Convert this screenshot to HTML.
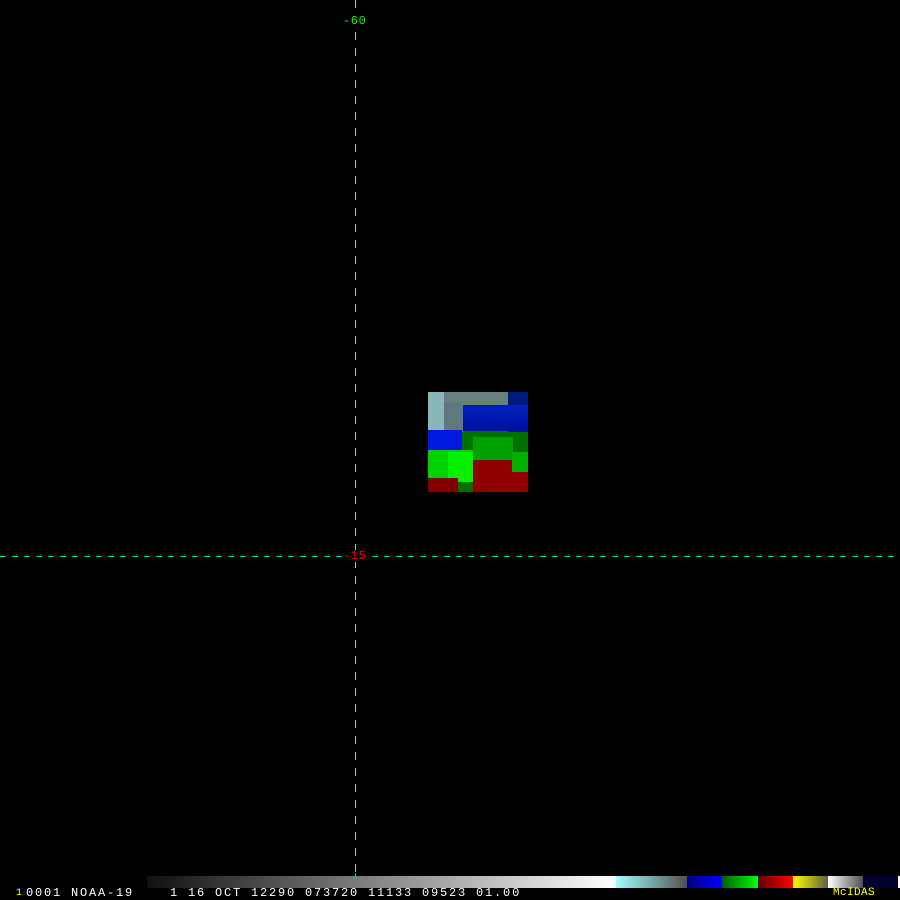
<!DOCTYPE html>
<html><head><style>
body{margin:0;width:900px;height:900px;background:#000;position:relative;overflow:hidden;font-family:"Liberation Mono",monospace}
.a{position:absolute}
.t{position:absolute;font-size:12px;line-height:12px;white-space:pre}
</style></head><body>
<div class="a" style="left:355px;top:0;width:1px;height:880px;background:repeating-linear-gradient(to bottom,#9cc 0 8px,transparent 8px 16px)"></div>
<div class="a" style="left:0;top:556px;width:900px;height:1px;background:repeating-linear-gradient(to right,#0cc 0 6px,transparent 6px 12px)"></div>
<div class="t" style="left:343px;top:15px;color:#0f0;background:#000;letter-spacing:0.6px">-60</div>
<div class="t" style="left:343px;top:550px;color:#f00;background:#000;letter-spacing:0.6px">-15</div>

<div class="a" style="left:428px;top:392px;width:100px;height:100px;background:#007000;overflow:hidden">
 <div class="a" style="left:0;top:0;width:100px;height:14px;background:#6a7f80"></div>
 <div class="a" style="left:80px;top:0;width:20px;height:40px;background:#001a80"></div>
 <div class="a" style="left:34px;top:13px;width:66px;height:26px;background:linear-gradient(#0020c0,#0010a0)"></div>
 <div class="a" style="left:15px;top:10px;width:20px;height:30px;background:#607880"></div>
 <div class="a" style="left:0;top:0;width:16px;height:40px;background:#8ab8b8"></div>
 <div class="a" style="left:0;top:38px;width:34px;height:22px;background:#0018e0"></div>
 <div class="a" style="left:0;top:58px;width:45px;height:30px;background:#00d000"></div>
 <div class="a" style="left:20px;top:60px;width:25px;height:30px;background:#00f000"></div>
 <div class="a" style="left:45px;top:45px;width:40px;height:25px;background:#00a000"></div>
 <div class="a" style="left:45px;top:68px;width:55px;height:32px;background:#900000"></div>
 <div class="a" style="left:84px;top:60px;width:16px;height:20px;background:#00b000"></div>
 <div class="a" style="left:0;top:86px;width:30px;height:14px;background:#800000"></div>
</div>

<div class="a" style="left:147px;top:876px;width:469px;height:12px;background:linear-gradient(to right,#101010,#fff)"></div>
<div class="a" style="left:616px;top:876px;width:71px;height:12px;background:linear-gradient(to right,#a0ffff,#505050)"></div>
<div class="a" style="left:687px;top:876px;width:35px;height:12px;background:linear-gradient(to right,#000080,#0000ff)"></div>
<div class="a" style="left:722px;top:876px;width:36px;height:12px;background:linear-gradient(to right,#006000,#00ff00)"></div>
<div class="a" style="left:758px;top:876px;width:35px;height:12px;background:linear-gradient(to right,#600000,#ff0000)"></div>
<div class="a" style="left:793px;top:876px;width:35px;height:12px;background:linear-gradient(to right,#ffff00,#606040)"></div>
<div class="a" style="left:828px;top:876px;width:35px;height:12px;background:linear-gradient(to right,#fff,#505050)"></div>
<div class="a" style="left:863px;top:876px;width:35px;height:12px;background:#000030"></div>
<div class="a" style="left:898px;top:876px;width:2px;height:12px;background:#fff"></div>
<div class="a" style="left:355px;top:873px;width:1px;height:6px;background:#0cc"></div>

<div class="t" style="left:16px;top:888px;color:#ff0;font-size:10px">1</div>
<div class="t" style="left:26px;top:887px;color:#fff;font-size:12px;letter-spacing:1.8px">0001 NOAA-19    1 16 OCT 12290 073720 11133 09523 01.00</div>
<div class="t" style="left:833px;top:887px;color:#ff0;font-size:11px;letter-spacing:0.4px">McIDAS</div>
</body></html>
